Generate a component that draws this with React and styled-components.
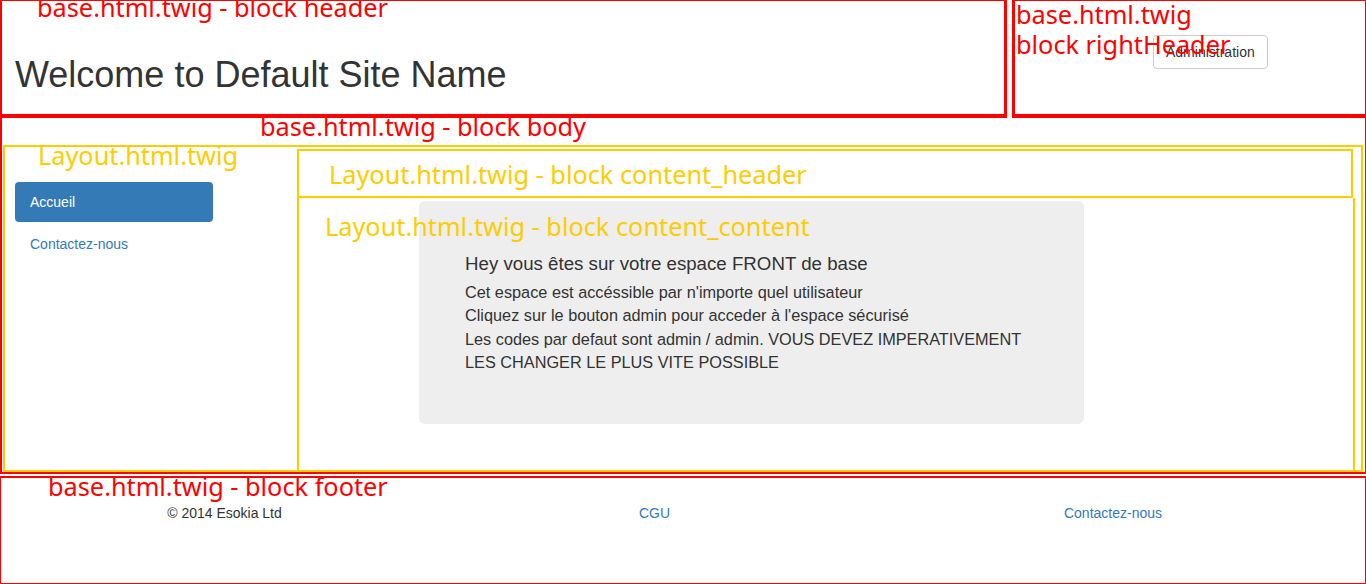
import React from 'react';
import styled, { createGlobalStyle } from 'styled-components';

const GlobalStyle = createGlobalStyle`
  html, body {
    margin: 0;
    padding: 0;
    background: #fff;
  }

  * {
    box-sizing: border-box;
  }
`;

const RED = '#ff0000';
const YELLOW = '#ffcc00';

const Page = styled.div`
  width: 1366px;
  height: 584px;
  display: flex;
  flex-direction: column;
  font-family: 'Liberation Sans', Arial, sans-serif;
  font-size: 14px;
  line-height: 20px;
  color: #333;
  overflow: hidden;
`;

const TopRow = styled.div`
  display: flex;
  gap: 5px;
  height: 118px;
`;

const Frame = styled.section`
  position: relative;
  border-style: solid;
  border-color: ${(p) => p.$color || RED};
  border-width: ${(p) => p.$widths};
`;

const HeaderFrame = styled(Frame)`
  width: 1007px;
`;

const RightHeaderFrame = styled(Frame)`
  flex: 1;
`;

const PageHeader = styled.div`
  height: 113px;
  margin: 0 ${(p) => p.$right || 0}px 0 ${(p) => p.$left || 0}px;
  border-bottom: 1px solid #eee;
`;

const Title = styled.h1`
  margin: 0;
  padding-top: 54px;
  font-size: 36px;
  font-weight: 500;
  line-height: 39.6px;
  color: #333;
`;

const AdminButton = styled.button`
  margin: 34px 0 0 138px;
  padding: 6px 12px;
  border: 1px solid #ccc;
  border-radius: 4px;
  background: #fff;
  font-family: inherit;
  font-size: 14px;
  line-height: 20px;
  color: #333;
`;

const BodyFrame = styled(Frame)`
  height: 356px;
  display: flex;
  flex-direction: column;
`;

const LayoutBox = styled.div`
  position: relative;
  flex: 1;
  display: flex;
  margin: 27px 2px 0 1px;
  border: 2px solid ${YELLOW};
`;

const Sidebar = styled.nav`
  width: 292px;
  padding: 35px 0 0 10px;
`;

const NavList = styled.ul`
  list-style: none;
  margin: 0;
  padding: 0;
  width: 198px;
  display: flex;
  flex-direction: column;
  gap: 2px;
`;

const NavLink = styled.a`
  display: block;
  padding: 10px 15px;
  border-radius: 4px;
  text-decoration: none;
  color: ${(p) => (p.$active ? '#fff' : '#337ab7')};
  background: ${(p) => (p.$active ? '#337ab7' : 'transparent')};
`;

const Main = styled.div`
  flex: 1;
  display: flex;
  flex-direction: column;
  margin: 2px 6px 0 0;
`;

const ContentHeader = styled.div`
  position: relative;
  height: 49px;
  margin-right: 2px;
  border: 2px solid ${YELLOW};
`;

const ContentContent = styled.div`
  position: relative;
  flex: 1;
  border-left: 2px solid ${YELLOW};
  border-right: 2px solid ${YELLOW};
`;

const Jumbotron = styled.div`
  width: 665px;
  height: 223px;
  margin: 3px 0 0 120px;
  padding: 51px 46px 0;
  border-radius: 6px;
  background: #eee;
`;

const JumboTitle = styled.h4`
  margin: 0 0 5px;
  font-size: 18.7px;
  font-weight: 500;
  line-height: 24px;
`;

const JumboText = styled.p`
  margin: 0;
  font-size: 16.3px;
  line-height: 23.3px;
`;

const FooterFrame = styled(Frame)`
  margin-top: 2px;
  flex: 1;
  padding-top: 25px;
`;

const FooterGrid = styled.div`
  display: grid;
  grid-template-columns: 447px 413px 1fr;
  text-align: center;
`;

const FooterLink = styled.a`
  color: #337ab7;
  text-decoration: none;
`;

const Label = styled.span`
  position: absolute;
  z-index: 2;
  top: ${(p) => p.$top}px;
  left: ${(p) => p.$left}px;
  font-family: 'Noto Sans', 'Open Sans', sans-serif;
  font-size: 25.3px;
  line-height: 30px;
  white-space: pre;
  color: ${(p) => p.$color || RED};
  pointer-events: none;
`;

export default function App() {
  return (
    <Page>
      <GlobalStyle />
      <TopRow>
        <HeaderFrame $widths="1px 3px 4px 2px">
          <Label $top={-9} $left={35}>base.html.twig - block header</Label>
          <PageHeader $left={13}>
            <Title>Welcome to Default Site Name</Title>
          </PageHeader>
        </HeaderFrame>
        <RightHeaderFrame $widths="1px 1px 4px 3px">
          <Label $top={-2} $left={1}>{'base.html.twig\nblock rightHeader'}</Label>
          <PageHeader $right={14}>
            <AdminButton type="button">Administration</AdminButton>
          </PageHeader>
        </RightHeaderFrame>
      </TopRow>

      <BodyFrame $widths="0 1px 2px 2px">
        <Label $top={-7} $left={258}>base.html.twig - block body</Label>
        <LayoutBox>
          <Label $top={-7} $left={33} $color={YELLOW}>Layout.html.twig</Label>
          <Sidebar>
            <NavList>
              <li>
                <NavLink href="#" $active>Accueil</NavLink>
              </li>
              <li>
                <NavLink href="#">Contactez-nous</NavLink>
              </li>
            </NavList>
          </Sidebar>
          <Main>
            <ContentHeader>
              <Label $top={8} $left={30} $color={YELLOW}>Layout.html.twig - block content_header</Label>
            </ContentHeader>
            <ContentContent>
              <Label $top={13} $left={26} $color={YELLOW}>Layout.html.twig - block content_content</Label>
              <Jumbotron>
                <JumboTitle>Hey vous êtes sur votre espace FRONT de base</JumboTitle>
                <JumboText>
                  Cet espace est accéssible par n'importe quel utilisateur
                  <br />
                  Cliquez sur le bouton admin pour acceder à l'espace sécurisé
                  <br />
                  Les codes par defaut sont admin / admin. VOUS DEVEZ IMPERATIVEMENT LES CHANGER LE PLUS VITE POSSIBLE
                </JumboText>
              </Jumbotron>
            </ContentContent>
          </Main>
        </LayoutBox>
      </BodyFrame>

      <FooterFrame $widths="2px 1px 1px 1px">
        <Label $top={-7} $left={47}>base.html.twig - block footer</Label>
        <FooterGrid>
          <span>© 2014 Esokia Ltd</span>
          <FooterLink href="#">CGU</FooterLink>
          <FooterLink href="#">Contactez-nous</FooterLink>
        </FooterGrid>
      </FooterFrame>
    </Page>
  );
}
